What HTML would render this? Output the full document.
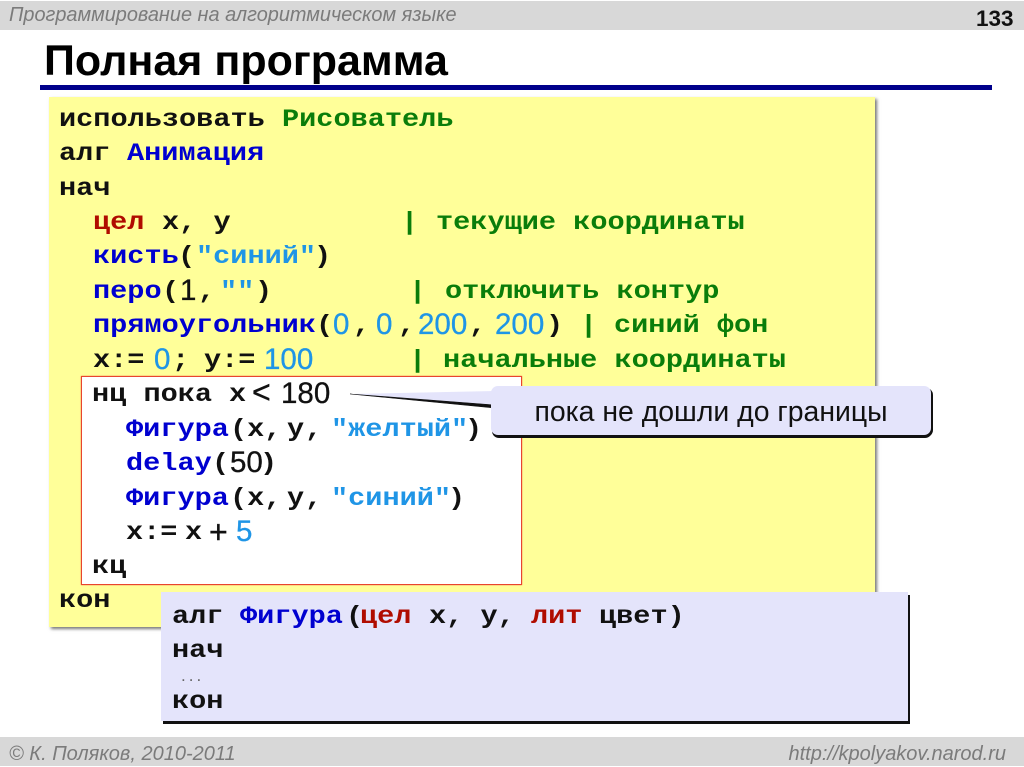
<!DOCTYPE html>
<html lang="ru"><head><meta charset="utf-8"><title>Полная программа</title>
<style>
html,body{margin:0;padding:0;background:#fff}
#p{position:relative;width:1024px;height:767px;overflow:hidden;background:#fff;font-family:"Liberation Sans",Arial,sans-serif}
.a{position:absolute}
.t{position:absolute;white-space:pre;font:bold 25px/30px "Liberation Mono",monospace;transform:scaleX(1.143);transform-origin:0 50%;color:#111;margin-top:-14px}
.n{position:absolute;white-space:pre;font:400 29.5px/30px "Liberation Sans",sans-serif;margin-top:-15px;-webkit-text-stroke:.3px currentColor}
.o{position:absolute;white-space:pre;font:400 32px/30px "Liberation Sans",sans-serif;margin-top:-15px;color:#111;-webkit-text-stroke:.4px currentColor}
.r{color:#b00c00}.b{color:#0000d0}.g{color:#0a7d0a}.c{color:#1f95e6}.k{color:#111}
</style></head><body><div id="p">
<div class="a" style="left:0;top:1px;width:1024px;height:29px;background:#d8d8d8"></div>
<div class="a" style="left:0;top:737px;width:1024px;height:29px;background:#d8d8d8"></div>
<div class="a" style="left:9px;top:2px;font:italic 19.9px/26px 'Liberation Sans',sans-serif;color:#7b7b7b;white-space:pre">Программирование на алгоритмическом языке</div>
<div class="a" style="left:976px;top:6px;font:bold 22.5px/26px 'Liberation Sans',sans-serif;color:#111">133</div>
<div class="a" style="left:44px;top:38px;font:bold 43px/46px 'Liberation Sans',sans-serif;color:#000;white-space:pre">Полная программа</div>
<div class="a" style="left:40px;top:85px;width:952px;height:5px;background:#00008b"></div>
<div class="a" style="left:9px;top:741px;font:italic 20px/26px 'Liberation Sans',sans-serif;color:#7b7b7b;white-space:pre">© К. Поляков, 2010-2011</div>
<div class="a" style="right:18px;top:741px;font:italic 20px/26px 'Liberation Sans',sans-serif;color:#7b7b7b;white-space:pre">http://kpolyakov.narod.ru</div>

<div class="a" style="left:49px;top:97px;width:826px;height:530px;background:#ffff99;box-shadow:2px 2px 3px #777"></div>

<span class="t" style="left:59px;top:119px">использовать</span><span class="t g" style="left:282px;top:119px">Рисователь</span>
<span class="t" style="left:59px;top:153px">алг</span><span class="t b" style="left:127px;top:153px">Анимация</span>
<span class="t" style="left:59px;top:188px">нач</span>

<span class="t r" style="left:93px;top:222px">цел</span><span class="t" style="left:162px;top:222px">x, y</span><span class="t g" style="left:401px;top:222px">|</span><span class="t g" style="left:436px;top:222px">текущие координаты</span>

<span class="t b" style="left:93px;top:256px">кисть</span><span class="t" style="left:178px;top:256px">(</span><span class="t c" style="left:196px;top:256px">"синий"</span><span class="t" style="left:314px;top:256px">)</span>

<span class="t b" style="left:93px;top:291px">перо</span><span class="t" style="left:162px;top:291px">(</span><span class="n k" style="left:180px;top:291px">1</span><span class="t" style="left:198px;top:291px">,</span><span class="t c" style="left:220px;top:291px">""</span><span class="t" style="left:255px;top:291px">)</span><span class="t g" style="left:409px;top:291px">|</span><span class="t g" style="left:445px;top:291px">отключить контур</span>

<span class="t b" style="left:93px;top:325px">прямоугольник</span><span class="t" style="left:316px;top:325px">(</span><span class="n c" style="left:333px;top:325px">0</span><span class="t" style="left:353px;top:325px">,</span><span class="n c" style="left:376px;top:325px">0</span><span class="t" style="left:398px;top:325px">,</span><span class="n c" style="left:418px;top:325px">200</span><span class="t" style="left:469px;top:325px">,</span><span class="n c" style="left:495px;top:325px">200</span><span class="t" style="left:546px;top:325px">)</span><span class="t g" style="left:580px;top:325px">|</span><span class="t g" style="left:614px;top:325px">синий фон</span>

<span class="t" style="left:93px;top:360px">x:=</span><span class="n c" style="left:154px;top:360px">0</span><span class="t" style="left:172px;top:360px">;</span><span class="t" style="left:204px;top:360px">y:=</span><span class="n c" style="left:264px;top:360px">100</span><span class="t g" style="left:409px;top:360px">|</span><span class="t g" style="left:443px;top:360px">начальные координаты</span>

<div class="a" style="left:81px;top:376px;width:439px;height:207px;background:#fff;border:1px solid #e8452f;box-shadow:0 0 1px #e8452f"></div>

<span class="t" style="left:92px;top:394px">нц пока</span><span class="t" style="left:229px;top:394px">x</span><span class="o" style="left:252px;top:392px">&lt;</span><span class="n k" style="left:281px;top:394px">180</span>

<span class="t b" style="left:126px;top:429px">Фигура</span><span class="t" style="left:230px;top:429px">(x,</span><span class="t" style="left:287px;top:429px">y</span><span class="t" style="left:305px;top:429px">,</span><span class="t c" style="left:331px;top:429px">"желтый"</span><span class="t" style="left:465px;top:429px">)</span>
<span class="t b" style="left:126px;top:463px">delay</span><span class="t" style="left:212px;top:463px">(</span><span class="n k" style="left:230px;top:463px">50</span><span class="t" style="left:260px;top:463px">)</span>
<span class="t b" style="left:126px;top:498px">Фигура</span><span class="t" style="left:230px;top:498px">(x,</span><span class="t" style="left:287px;top:498px">y</span><span class="t" style="left:305px;top:498px">,</span><span class="t c" style="left:331px;top:498px">"синий"</span><span class="t" style="left:448px;top:498px">)</span>
<span class="t" style="left:126px;top:532px">x:=</span><span class="t" style="left:185px;top:532px">x</span><span class="o" style="left:209px;top:532px">+</span><span class="n c" style="left:236px;top:532px">5</span>
<span class="t" style="left:92px;top:566px">кц</span>
<span class="t" style="left:59px;top:600px">кон</span>

<svg class="a" style="left:340px;top:380px" width="170" height="50"><polygon points="10,14 155,11 155,28" fill="#e4e4fb"/><polygon points="10,14 155,25 155,28" fill="#111" stroke="#111" stroke-width=".6"/></svg>
<div class="a" style="left:491px;top:386px;width:440px;height:49px;background:#e4e4fb;border-radius:7px;box-shadow:1px 3px 0 #111,2px 2px 0 #111"></div>
<div class="a" style="left:491px;top:396px;width:440px;text-align:center;font:28.4px/32px 'Liberation Sans',sans-serif;color:#111;white-space:pre">пока не дошли до границы</div>

<div class="a" style="left:161px;top:592px;width:747px;height:129px;background:#e4e4fb;box-shadow:2px 3px 0 #111"></div>
<span class="t" style="left:172px;top:616px">алг</span><span class="t b" style="left:240px;top:616px">Фигура</span><span class="t" style="left:346px;top:616px">(</span><span class="t r" style="left:360px;top:616px">цел</span><span class="t" style="left:429px;top:616px">x, y,</span><span class="t r" style="left:531px;top:616px">лит</span><span class="t" style="left:599px;top:616px">цвет)</span>
<span class="t" style="left:172px;top:650px">нач</span>
<div class="a" style="left:181px;top:666px;font:17px/20px 'Liberation Sans',sans-serif;color:#666;letter-spacing:3px">...</div>
<span class="t" style="left:172px;top:701px">кон</span>
</div></body></html>
